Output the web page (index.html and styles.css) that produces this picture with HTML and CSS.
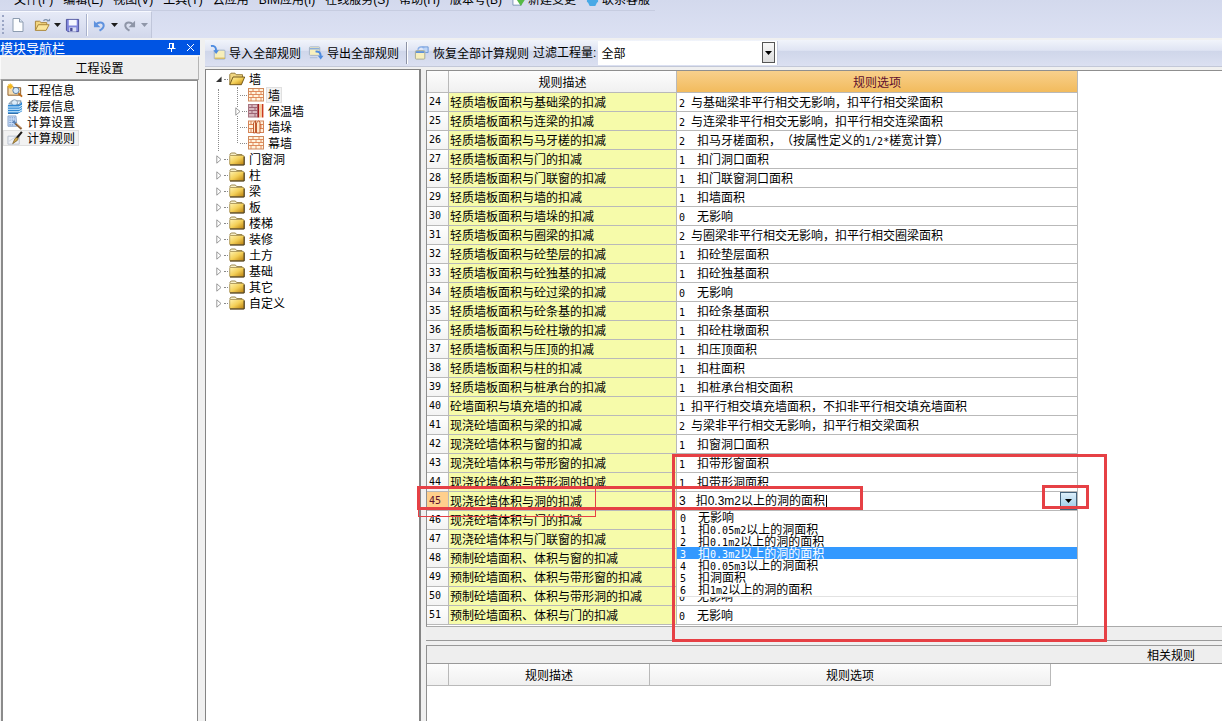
FILE: index.html
```html
<!DOCTYPE html>
<html lang="zh-CN">
<head>
<meta charset="utf-8">
<title>计算规则</title>
<link rel="stylesheet" href="styles.css">
</head>
<body>
<svg class="defs" aria-hidden="true">
  <defs>
    <linearGradient id="gold" x1="0" y1="0" x2="1" y2="1"><stop offset="0" stop-color="#fff3b0"/><stop offset=".5" stop-color="#f3cf57"/><stop offset="1" stop-color="#b87c0a"/></linearGradient>
    <symbol id="folder" viewBox="0 0 16 14"><path d="M1 3.5V2.2L2.2 1h4.2l1.2 1.5H13V4" fill="#f7efc8" stroke="#9b8850"/><rect x=".7" y="3.5" width="14.3" height="9.3" rx=".8" fill="url(#gold)" stroke="#a0894a" stroke-width=".8"/><path d="M1 13h14.2V4.500" fill="none" stroke="#3c2b08"/></symbol>
    <symbol id="folder-open" viewBox="0 0 16 14"><path d="M.8 12.500V2.500L2 1.200h4l1.200 1.500h6.300V5" fill="#f0d681" stroke="#8d7330" stroke-width=".9"/><path d="M.8 12.700 4 5h11.700l-3.300 7.700z" fill="url(#gold)" stroke="#6a4f12" stroke-width=".9"/></symbol>
    <symbol id="wall" viewBox="0 0 16 14"><rect x=".5" y=".5" width="15" height="12.500" fill="#fff3dd" stroke="#cf8a5e"/><path d="M1 3.500h14M1 6.500h14M1 9.500h14M5 1v2.500M11 1v2.500M3 3.500v3M8 3.500v3M13 3.500v3M5 6.500v3M11 6.500v3M3 9.500V13M8 9.500V13M13 9.500V13" stroke="#dd8150" fill="none" stroke-width=".9"/></symbol>
    <symbol id="wall-warm" viewBox="0 0 16 14"><rect x=".5" y=".5" width="9" height="12.500" fill="#d8b7be" stroke="#a77480"/><path d="M1 3.500h8M1 6.500h8M1 9.500h8M4 1v2.500M7 3.500v3M4 6.500v3M7 9.500V13" stroke="#9d6575" fill="none"/><path d="M10.500 0v13.500" stroke="#a01b1b" stroke-width="1.600"/><path d="M12.500 0v13.500" stroke="#f7cf98" stroke-width="2"/><path d="M14.600 0v13.500" stroke="#cc3a1c" stroke-width="1.600"/></symbol>
    <symbol id="wall-pier" viewBox="0 0 16 14"><rect x=".5" y="1" width="15" height="11.500" fill="#fff0da" stroke="#d58458"/><path d="M1 4.500h4M1 8.500h4M11 4.500h4M11 8.500h4M3 1v3.500M3 8.500v4M13 4.500v4" stroke="#dd8150" fill="none"/><path d="M5.500 13V3l2-2.200v12zM8.500 13V3l2-2.200L12 2v11z" fill="#ffe7c8" stroke="#b94a1d" stroke-width=".9"/></symbol>
    <symbol id="project" viewBox="0 0 17 15"><path d="M1 12.500V3h5l1 1.500h7.500v8z" fill="#f6ddb0" stroke="#8c5a24"/><path d="M3.500 0v6M.5 3h6M1.500 1l4 4M5.500 1l-4 4" stroke="#f5b81b" stroke-width="1.200"/><circle cx="9.500" cy="7.500" r="3.300" fill="#d5e9fb" stroke="#56799f"/><path d="m12 10.500 4 3.500" stroke="#bd6917" stroke-width="2"/></symbol>
    <symbol id="floor" viewBox="0 0 17 16"><path d="m2 5 3-3h10l-2 4z" fill="#eaf3fb" stroke="#6d87a0"/><circle cx="8" cy="4" r="3.200" fill="#dcecf9" stroke="#8a9cae"/><path d="M1 6h12l3-3v10l-3 2H1z" fill="#2e87d4"/><path d="M0 8.500h13l3-2M0 11h13l3-2M0 13.500h13l3-2" stroke="#d5efff" fill="none" stroke-width="1.100"/><path d="M1 15.500h11" stroke="#1c62a4"/></symbol>
    <symbol id="calc" viewBox="0 0 17 16"><path d="M1 1h8.500l1 11H1z" fill="#c6dcf7" stroke="#8aa3cb"/><path d="M2.500 3h6M2.500 5.500h6M2.500 8h6M2.500 10.500h5" stroke="#6f8fc4" stroke-dasharray="1.500 1"/><path d="m6.500 6.500 3 3" stroke="#5b83b7" stroke-width="2.500"/><path d="m9 9 6.500 6" stroke="#865b33" stroke-width="2.200"/><path d="m9.500 8.500 6 5.500" stroke="#ddb187" stroke-width=".8"/></symbol>
    <symbol id="rule" viewBox="0 0 17 15"><path d="M1 5h12v8.500H1z" fill="#eef1f7" stroke="#b9c0cd"/><path d="M2 10.500 13.500 3" stroke="#cdd3dd"/><path d="M15.800.5 10 7.500" stroke="#1c1a18" stroke-width="2.200"/><path d="m10.500 6.500-2 1-2.500 5.500 5-3.500 1-2z" fill="#cfa94a" stroke="#6c501b" stroke-width=".7"/></symbol>
    <symbol id="import" viewBox="0 0 17 17"><rect x="4.500" y="5.500" width="11.500" height="9.500" rx="1" fill="#f6eeb9" stroke="#9fb0c8"/><path d="M5 14h11" stroke="#d2ab3d"/><path d="M1 1c4-.5 5.500 1.500 5.500 5" fill="none" stroke="#4d8be0" stroke-width="2"/><path d="M3.500 5.500H9.500L6.500 9.500z" fill="#4d8be0"/></symbol>
    <symbol id="export" viewBox="0 0 17 17"><rect x="1.500" y="2" width="11" height="9" rx="1" fill="#f8f0be" stroke="#a2b2c8"/><path d="M2 4h10" stroke="#84a9df" stroke-width="1.500"/><path d="M2 13.500h8" stroke="#a9bbd8"/><path d="M8 7c4-.5 5.500 1.500 5.500 5" fill="none" stroke="#4d8be0" stroke-width="2"/><path d="M10.500 11.500h6l-3 4z" fill="#4d8be0"/></symbol>
    <symbol id="restore" viewBox="0 0 17 17"><path d="M8 2h7v6h-3" fill="#bed5f7" stroke="#6b96d8"/><rect x="1.500" y="6" width="10" height="9" rx="1" fill="#f7efbd" stroke="#a4a992"/><path d="M2 7.500h9" stroke="#5f91d8" stroke-width="2"/><path d="M4 5c1-3 4-4 7-2" fill="none" stroke="#8bb0e8" stroke-width="1.500"/></symbol>
    <symbol id="file" viewBox="0 0 14 16"><path d="M2 1.500h6.500l3.500 3.500v9.500H2z" fill="#fdfeff" stroke="#8d9cb0"/><path d="M8.500 1.500V5H12" fill="#dbe6f3" stroke="#8d9cb0"/></symbol>
    <symbol id="open" viewBox="0 0 18 16"><path d="M1.500 13.500V4H6l1.500 1.500h6V8" fill="#f3d680" stroke="#a88235"/><path d="m1.500 13.700 3-6h11.500l-3.200 6z" fill="#fbe59a" stroke="#a88235"/><path d="M10 3.500c2-2 4-1.500 5 .5" fill="none" stroke="#8093ad" stroke-width="1.300"/><path d="M13.500 4h3.500V1z" fill="#8093ad"/></symbol>
    <symbol id="save" viewBox="0 0 16 16"><path d="M1.500 1.500h13v13H3l-1.500-1.500z" fill="#8086dc" stroke="#4b4f9b"/><rect x="4" y="2" width="8.500" height="6" fill="#f5f7ff"/><rect x="4.500" y="10" width="7.500" height="4.500" fill="#dadff5"/><rect x="5.500" y="10.500" width="2.500" height="3.500" fill="#474b93"/></symbol>
    <symbol id="undo" viewBox="0 0 14 14"><path d="M3 6.500C5 3 11 2.500 11.500 6.500 11.800 9.500 9.500 11 7 12.500" fill="none" stroke="currentColor" stroke-width="2.200"/><path d="M1 2v7h7z" fill="currentColor"/></symbol>
    <symbol id="down" viewBox="0 0 7 4"><path d="M0 0h7L3.500 4z" fill="currentColor"/></symbol>
    <symbol id="closed" viewBox="0 0 6 9"><path d="M.8.8 5 4.500.8 8.200z" fill="#fff" stroke="#8e8e8e" stroke-width=".9"/></symbol>
    <symbol id="opened" viewBox="0 0 7 7"><path d="M6.500 0v6.500H0z" fill="#333"/></symbol>
  </defs>
</svg>

<header class="top">
  <nav class="menubar">
    <a href="#">文件(F)</a><a href="#">编辑(E)</a><a href="#">视图(V)</a><a href="#">工具(T)</a><a href="#">云应用</a><a href="#">BIM应用(I)</a><a href="#">在线服务(S)</a><a href="#">帮助(H)</a><a href="#">版本号(B)</a>
    <a href="#"><svg class="mi" viewBox="0 0 14 14"><path d="M1 2h9v10H1z" fill="#fff" stroke="#7a94b5"/><path d="M5 6h9l-4.500 7z" fill="#56b947"/></svg>新建变更</a>
    <a href="#"><svg class="mi" viewBox="0 0 14 14"><path d="M1 6a6 5 0 0 1 12 0v3H1zM2 9l2 4h6l2-4z" fill="#48a9e6"/></svg>联系客服</a>
  </nav>
  <div class="toolbar">
    <button class="tb" aria-label="新建"><svg class="i-file"><use href="#file"/></svg></button>
    <button class="tb" aria-label="打开"><svg class="i-open"><use href="#open"/></svg><svg class="arrow"><use href="#down"/></svg></button>
    <button class="tb" aria-label="保存"><svg class="i-save"><use href="#save"/></svg></button>
    <span class="sep"></span>
    <button class="tb undo" aria-label="撤销"><svg class="i-undo"><use href="#undo"/></svg><svg class="arrow"><use href="#down"/></svg></button>
    <button class="tb redo" aria-label="重做"><svg class="i-undo flip"><use href="#undo"/></svg><svg class="arrow"><use href="#down"/></svg></button>
  </div>
</header>

<div class="workspace">
  <aside class="nav">
    <div class="nav-title"><span>模块导航栏</span>
      <button aria-label="固定"><svg width="9" height="9" viewBox="0 0 9 9"><path d="M2 .5h5M2.500 .5v5M5.500 .5v5M6.500 .5v5M.5 5.500h8M4.500 5.500V9" stroke="#fff" fill="none"/></svg></button>
      <button aria-label="关闭"><svg width="9" height="9" viewBox="0 0 9 9"><path d="m1 1 7 7M8 1 1 8" stroke="#fff" fill="none"/></svg></button>
    </div>
    <button class="nav-head">工程设置</button>
    <ul class="nav-list">
      <li><a href="#"><svg><use href="#project"/></svg><span>工程信息</span></a></li>
      <li><a href="#"><svg><use href="#floor"/></svg><span>楼层信息</span></a></li>
      <li><a href="#"><svg><use href="#calc"/></svg><span>计算设置</span></a></li>
      <li class="on"><a href="#"><svg><use href="#rule"/></svg><span>计算规则</span></a></li>
    </ul>
  </aside>

  <main class="content">
    <div class="actions">
      <button><svg><use href="#import"/></svg>导入全部规则</button>
      <button><svg><use href="#export"/></svg>导出全部规则</button>
      <span class="sep dark"></span>
      <button><svg><use href="#restore"/></svg>恢复全部计算规则</button>
      <label for="filter">过滤工程量:</label>
      <span class="combo"><select id="filter"><option>全部</option></select><span class="combo-btn"><svg class="arrow"><use href="#down"/></svg></span></span>
    </div>
    <div class="panes">
      <ul class="tree">
        <li><svg class="tw"><use href="#opened"/></svg><i></i><svg class="ic"><use href="#folder-open"/></svg>墙
          <ul>
            <li class="sel"><i></i><svg class="ic"><use href="#wall"/></svg><span>墙</span></li>
            <li class="sub"><svg class="tw"><use href="#closed"/></svg><i></i><svg class="ic"><use href="#wall-warm"/></svg><span>保温墙</span></li>
            <li><i></i><svg class="ic"><use href="#wall-pier"/></svg><span>墙垛</span></li>
            <li><i></i><svg class="ic"><use href="#wall"/></svg><span>幕墙</span></li>
          </ul>
        </li>
        <li><svg class="tw"><use href="#closed"/></svg><i></i><svg class="ic"><use href="#folder"/></svg>门窗洞</li>
        <li><svg class="tw"><use href="#closed"/></svg><i></i><svg class="ic"><use href="#folder"/></svg>柱</li>
        <li><svg class="tw"><use href="#closed"/></svg><i></i><svg class="ic"><use href="#folder"/></svg>梁</li>
        <li><svg class="tw"><use href="#closed"/></svg><i></i><svg class="ic"><use href="#folder"/></svg>板</li>
        <li><svg class="tw"><use href="#closed"/></svg><i></i><svg class="ic"><use href="#folder"/></svg>楼梯</li>
        <li><svg class="tw"><use href="#closed"/></svg><i></i><svg class="ic"><use href="#folder"/></svg>装修</li>
        <li><svg class="tw"><use href="#closed"/></svg><i></i><svg class="ic"><use href="#folder"/></svg>土方</li>
        <li><svg class="tw"><use href="#closed"/></svg><i></i><svg class="ic"><use href="#folder"/></svg>基础</li>
        <li><svg class="tw"><use href="#closed"/></svg><i></i><svg class="ic"><use href="#folder"/></svg>其它</li>
        <li><svg class="tw"><use href="#closed"/></svg><i></i><svg class="ic"><use href="#folder"/></svg>自定义</li>
      </ul>

      <div class="grids">
        <section class="main-grid">
          <table class="rules">
            <colgroup><col class="c-no"><col class="c-desc"><col class="c-opt"></colgroup>
            <thead><tr><th></th><th>规则描述</th><th class="hot">规则选项</th></tr></thead>
            <tbody>
            <tr><th>24</th><td>轻质墙板面积与基础梁的扣减</td><td><span class="n">2 </span>与基础梁非平行相交无影响，扣平行相交梁面积</td></tr>
            <tr><th>25</th><td>轻质墙板面积与连梁的扣减</td><td><span class="n">2 </span>与连梁非平行相交无影响，扣平行相交连梁面积</td></tr>
            <tr><th>26</th><td>轻质墙板面积与马牙槎的扣减</td><td><span class="n">2  </span>扣马牙槎面积，（按属性定义的<span class="n">1/2*</span>槎宽计算）</td></tr>
            <tr><th>27</th><td>轻质墙板面积与门的扣减</td><td><span class="n">1  </span>扣门洞口面积</td></tr>
            <tr><th>28</th><td>轻质墙板面积与门联窗的扣减</td><td><span class="n">1  </span>扣门联窗洞口面积</td></tr>
            <tr><th>29</th><td>轻质墙板面积与墙的扣减</td><td><span class="n">1  </span>扣墙面积</td></tr>
            <tr><th>30</th><td>轻质墙板面积与墙垛的扣减</td><td><span class="n">0  </span>无影响</td></tr>
            <tr><th>31</th><td>轻质墙板面积与圈梁的扣减</td><td><span class="n">2 </span>与圈梁非平行相交无影响，扣平行相交圈梁面积</td></tr>
            <tr><th>32</th><td>轻质墙板面积与砼垫层的扣减</td><td><span class="n">1  </span>扣砼垫层面积</td></tr>
            <tr><th>33</th><td>轻质墙板面积与砼独基的扣减</td><td><span class="n">1  </span>扣砼独基面积</td></tr>
            <tr><th>34</th><td>轻质墙板面积与砼过梁的扣减</td><td><span class="n">0  </span>无影响</td></tr>
            <tr><th>35</th><td>轻质墙板面积与砼条基的扣减</td><td><span class="n">1  </span>扣砼条基面积</td></tr>
            <tr><th>36</th><td>轻质墙板面积与砼柱墩的扣减</td><td><span class="n">1  </span>扣砼柱墩面积</td></tr>
            <tr><th>37</th><td>轻质墙板面积与压顶的扣减</td><td><span class="n">1  </span>扣压顶面积</td></tr>
            <tr><th>38</th><td>轻质墙板面积与柱的扣减</td><td><span class="n">1  </span>扣柱面积</td></tr>
            <tr><th>39</th><td>轻质墙板面积与桩承台的扣减</td><td><span class="n">1  </span>扣桩承台相交面积</td></tr>
            <tr><th>40</th><td>砼墙面积与填充墙的扣减</td><td><span class="n">1 </span>扣平行相交填充墙面积，不扣非平行相交填充墙面积</td></tr>
            <tr><th>41</th><td>现浇砼墙面积与梁的扣减</td><td><span class="n">2 </span>与梁非平行相交无影响，扣平行相交梁面积</td></tr>
            <tr><th>42</th><td>现浇砼墙体积与窗的扣减</td><td><span class="n">1  </span>扣窗洞口面积</td></tr>
            <tr><th>43</th><td>现浇砼墙体积与带形窗的扣减</td><td><span class="n">1  </span>扣带形窗面积</td></tr>
            <tr><th>44</th><td>现浇砼墙体积与带形洞的扣减</td><td><span class="n">1  </span>扣带形洞面积</td></tr>
            <tr class="current"><th>45</th><td>现浇砼墙体积与洞的扣减</td><td class="editing">
              <div class="editor"><input type="text" aria-label="规则选项" value="3   扣0.3m2以上的洞的面积"><span class="caret"></span><button aria-label="展开选项"><svg class="arrow"><use href="#down"/></svg></button></div>
              <ul class="options" role="listbox" aria-label="规则选项">
                <li role="option"><span class="n">0  </span>无影响</li>
                <li role="option"><span class="n">1  </span>扣<span class="n">0.05m2</span>以上的洞面积</li>
                <li role="option"><span class="n">2  </span>扣<span class="n">0.1m2</span>以上的洞的面积</li>
                <li role="option" aria-selected="true" class="picked"><span class="n">3  </span>扣<span class="n">0.3m2</span>以上的洞的面积</li>
                <li role="option"><span class="n">4  </span>扣<span class="n">0.05m3</span>以上的洞面积</li>
                <li role="option"><span class="n">5  </span>扣洞面积</li>
                <li role="option"><span class="n">6  </span>扣<span class="n">1m2</span>以上的洞的面积</li>
              </ul></td></tr>
            <tr><th>46</th><td>现浇砼墙体积与门的扣减</td><td></td></tr>
            <tr><th>47</th><td>现浇砼墙体积与门联窗的扣减</td><td></td></tr>
            <tr><th>48</th><td>预制砼墙面积、体积与窗的扣减</td><td></td></tr>
            <tr><th>49</th><td>预制砼墙面积、体积与带形窗的扣减</td><td></td></tr>
            <tr><th>50</th><td>预制砼墙面积、体积与带形洞的扣减</td><td><span class="n">0  </span>无影响</td></tr>
            <tr><th>51</th><td>预制砼墙面积、体积与门的扣减</td><td><span class="n">0  </span>无影响</td></tr>
            </tbody>
          </table>
          <div class="mark mark-list"></div>
          <div class="mark mark-row"></div>
          <div class="mark mark-arrow"></div>
          <div class="mark mark-name"></div>
        </section>
        <div class="scroll-strip"></div>
        <section class="related">
          <h2>相关规则</h2>
          <table class="rules small">
            <colgroup><col class="c-no"><col class="c-rel"><col class="c-opt"></colgroup>
            <thead><tr><th></th><th>规则描述</th><th>规则选项</th></tr></thead>
          </table>
        </section>
      </div>
    </div>
  </main>
</div>
</body>
</html>
```

FILE: styles.css
```css
* { box-sizing: border-box; }
html, body { height: 100%; }
body {
  margin: 0;
  display: flex;
  flex-direction: column;
  overflow: hidden;
  background: #f0f0f0;
  color: #000;
  font: 12px/16px "Noto Sans CJK SC", "Liberation Sans", sans-serif;
  text-spacing-trim: space-all;
}
ul { list-style: none; margin: 0; padding: 0; }
a { color: inherit; text-decoration: none; }
button, input, select { font: inherit; color: inherit; border: 0; padding: 0; margin: 0; background: none; }
svg { flex: none; display: block; }
.defs { position: absolute; width: 0; height: 0; }
.n { font-family: "DejaVu Sans Mono", monospace; font-size: 10px; line-height: 1; white-space: pre; }
.arrow { width: 7px; height: 4px; }

/* menu and toolbar */
.top { flex: none; background: linear-gradient(#d3d9ed, #dce1f3); }
.menubar {
  display: flex;
  align-items: flex-end;
  gap: 10px;
  height: 11px;
  width: max-content;
  padding: 0 5px 2px 14px;
  overflow: hidden;
  white-space: nowrap;
  border-bottom: 1px solid #c6cce0;
}
.menubar a { display: flex; align-items: center; gap: 3px; font-family: "Liberation Sans", "Noto Sans CJK SC", sans-serif; height: 16px; line-height: 16px; }
.mi { width: 13px; height: 13px; }
.toolbar {
  display: flex;
  align-items: center;
  width: 152px;
  height: 27px;
  padding-left: 10px;
  border-top: 1px solid #f7f9ff;
  border-right: 1px solid #c0c6da;
  background: linear-gradient(#e6eaf7, #d1d7eb);
  position: relative;
}
.toolbar::before { content: ""; position: absolute; left: 2px; top: 3px; bottom: 4px; border-left: 2px dotted #9aa5c4; }
.tb { display: flex; align-items: center; gap: 3px; color: #1b1b1b; }
.tb + .tb { margin-left: 8px; }
.i-file { width: 16px; height: 16px; }
.i-open { width: 17px; height: 16px; }
.i-save { width: 15px; height: 15px; }
.i-undo { width: 13px; height: 13px; color: #5f92de; }
.tb.undo, .tb.redo { gap: 5px; }
.tb.redo { margin-left: 5px; }
.toolbar .tb:nth-of-type(3) { margin-left: 4px; }
.toolbar .sep { margin: 0 5px 0 6px; }
.redo, .redo .i-undo { color: #8f96a8; }
.flip { transform: scaleX(-1); }
.sep { width: 2px; height: 22px; border-left: 1px solid #a9b2cc; border-right: 1px solid #fff; }

/* side navigation */
.workspace { flex: 1; min-height: 0; display: flex; gap: 5px; padding-top: 2px; }
.nav { flex: none; width: 200px; display: flex; flex-direction: column; background: #f0f0f0; }
.nav-title { display: flex; align-items: center; gap: 10px; height: 15px; padding-right: 5px; background: #0054e3; color: #fff; font-size: 13px; line-height: 14px; }
.nav-title span { flex: 1; }
.nav-head { height: 24px; line-height: 22px; margin: 1px 1px 0 0; background: #efefef; border: 1px solid #fafafa; border-right-color: #b5b5b5; border-bottom-color: #a0a0a0; }
.nav-list { flex: 1; margin: 0 2px 0 1px; padding-top: 1px; background: #fff; border: 1px solid #8b8b8b; border-left-width: 2px; border-bottom: 0; }
.nav-list a { display: flex; align-items: center; height: 16px; padding-left: 4px; gap: 3px; width: max-content; }
.nav-list svg { width: 16px; height: 15px; }
.nav-list span { padding: 0 1px; line-height: 16px; }
.nav-list .on a { padding-right: 3px; background: #f2f2f2; outline: 1px solid #dfdfdf; outline-offset: -1px; }

/* right side */
.content { flex: 1; min-width: 0; display: flex; flex-direction: column; }
.actions {
  flex: none;
  display: flex;
  align-items: center;
  height: 27px;
  padding-left: 5px;
  background: linear-gradient(#f1f4fb, #dfe4f3 40%, #cfd6ea 42%, #dbe0f1);
  border-bottom: 1px solid #c3c8d8;
  white-space: nowrap;
}
.actions button { display: flex; align-items: center; gap: 3px; margin-right: 7px; }
.actions button svg { width: 16px; height: 16px; }
.actions .sep { margin-right: 6px; }
.actions button:nth-of-type(3) { margin-right: 4px; }
.sep.dark { border-left-color: #8d93a5; }
.actions label { font-family: "Liberation Sans", "Noto Sans CJK SC", sans-serif; }
.combo { position: relative; display: flex; width: 180px; height: 24px; margin-left: 2px; background: #fff; border-right: 1px solid #c8cde0; }
.combo select { flex: 1; appearance: none; padding-left: 3px; }
.combo-btn { position: absolute; right: 2px; top: 1px; width: 13px; height: 21px; display: grid; place-items: center; border: 1px solid #555; background: linear-gradient(#f8f8f8, #dcdcdc); pointer-events: none; }

.panes { flex: 1; min-height: 0; display: flex; gap: 5px; padding-top: 2px; }
.tree { flex: none; width: 216px; padding: 1px 0 0 10px; background: #fff; border: 1px solid #848484; border-right-width: 2px; border-bottom: 0; line-height: 16px; position: relative; }
.tree li { display: flex; flex-wrap: wrap; align-items: center; min-height: 16px; }
.tree i { width: 4px; margin-right: 1px; border-top: 1px dotted #8a8a8a; }
.tree .tw { width: 6px; height: 9px; margin-right: 2px; }
.tree .ic { width: 16px; height: 14px; margin-right: 4px; }
.tree ul { width: 100%; position: relative; padding-left: 22px; }
.tree ul::before, .tree ul::after { content: ""; position: absolute; border-left: 1px dotted #8a8a8a; }
.tree ul::before { left: 2px; top: 2px; bottom: 0; }
.tree ul::after { left: 21px; top: 0; bottom: 8px; }
.tree ul li { position: relative; z-index: 1; padding-left: 2px; }
.tree ul i { width: 7px; }
.tree ul .ic { margin-right: 2px; }
.tree ul span { padding: 0 2px; }
.tree .sub { padding-left: 0; margin-left: -3px; }
.tree .sub .tw { background: #fff; margin-right: 1px; }
.tree .sub i { width: 5px; }
.sel span { background: #f2f2f2; outline: 1px solid #e0e0e0; outline-offset: -1px; }

/* grids */
.grids { flex: 1; min-width: 0; display: flex; flex-direction: column; }
.main-grid { position: relative; flex: none; margin-top: 1px; padding-bottom: 1px; background: #fff; border: 1px solid #8f8f8f; border-right: 0; border-bottom-color: #aaa; }
.rules { table-layout: fixed; width: 651px; border-collapse: separate; border-spacing: 0; }
.rules.small { width: 624px; }
.c-no { width: 22px; }
.c-desc { width: 228px; }
.c-rel { width: 201px; }
.rules th, .rules td { padding: 0 0 0 2px; text-align: left; font-weight: 400; line-height: 18px; border-right: 1px solid #b9b9b9; border-bottom: 1px solid #b9b9b9; white-space: nowrap; }
.rules thead th { height: 22px; padding: 0; text-align: center; background: linear-gradient(#fdfdfd, #f0f0f0); }
.rules thead .hot { color: #5d0f2e; background: linear-gradient(#f8d08c, #f2bb5d); }
.rules tbody th { font: 10px/18px "DejaVu Sans Mono", monospace; background: linear-gradient(#fff, #f3f3f3); }
.rules td:nth-child(2) { background: #f6fbaa; padding-left: 1px; }
.rules td { height: 19px; }
.rules .current th { background: #ffcf8c; color: #5d0f2e; }
.rules td.editing { position: relative; }
.editor { display: flex; align-items: center; height: 18px; }
.editor input { width: 147px; height: 18px; outline: 0; font-family: "Liberation Sans", "Noto Sans CJK SC", sans-serif; }
.caret { width: 1px; height: 12px; background: #000; }
.editor button { width: 17px; height: 18px; margin-left: auto; display: grid; place-items: center; border: 1px solid #44637d; background: linear-gradient(#dceffb, #9cc9e6); }
.options { position: absolute; z-index: 2; top: 19px; left: 0; right: 0; background: #fff; border-bottom: 1px solid #e2e2e2; }
.options li { height: 12px; line-height: 12px; padding-left: 3px; }
.options li:last-child { height: 13px; }
.options .picked { background: #3399ff; color: #fff; }

/* review marks drawn over the grid */
.mark { position: absolute; z-index: 3; border: 3px solid #e64045; pointer-events: none; }
.mark-list { left: 245px; top: 383px; width: 435px; height: 188px; }
.mark-row { left: -10px; top: 415px; width: 446px; height: 24px; }
.mark-arrow { left: 615px; top: 414px; width: 47px; height: 24px; }
.mark-name { left: -9px; top: 416px; width: 178px; height: 30px; border-width: 1px; }

.scroll-strip { flex: none; height: 14px; background: #eee; border-bottom: 1px solid #999; }
.related { flex: 1; margin-top: 4px; background: #fff; border-left: 1px solid #8f8f8f; }
.related h2 { margin: 0; height: 19px; padding-right: 27px; text-align: right; font-size: 12px; font-weight: 400; line-height: 17px; background: #eee; border: 1px solid #999; border-width: 1px 0; }
```
